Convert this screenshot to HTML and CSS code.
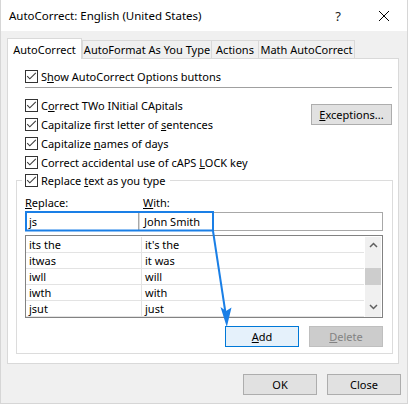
FILE: index.html
```html
<!DOCTYPE html>
<html>
<head>
<meta charset="utf-8">
<link rel="stylesheet" href="styles.css">
</head>
<body>
<div class="window">
  <div class="titlebar">
    <span class="title">AutoCorrect: English (United States)</span>
    <span class="capbtn help">?</span>
    <span class="capbtn close"><svg width="12" height="12" viewBox="0 0 12 12"><path d="M1 1L11 11M11 1L1 11" stroke="#000" stroke-width="1" fill="none"/></svg></span>
  </div>
  <div class="content">
    <div class="tabs">
      <div class="tab active t1">AutoCorrect</div>
      <div class="tab t2">AutoFormat As You Type</div>
      <div class="tab t3">Actions</div>
      <div class="tab t4">Math AutoCorrect</div>
    </div>
    <div class="panel">
      <div class="check"><span class="box"><svg width="11" height="11" viewBox="0 0 11 11"><polyline points="1.2,5.2 3.8,7.8 9.8,1.8" fill="none" stroke="#3a3a3a" stroke-width="1.1"/></svg></span><span>S<u>h</u>ow AutoCorrect Options buttons</span></div>
      <div class="sep"></div>
      <div class="opts">
        <div class="opts-list">
          <div class="check"><span class="box"><svg width="11" height="11" viewBox="0 0 11 11"><polyline points="1.2,5.2 3.8,7.8 9.8,1.8" fill="none" stroke="#3a3a3a" stroke-width="1.1"/></svg></span><span>C<u>o</u>rrect TWo INitial CApitals</span></div>
          <div class="check"><span class="box"><svg width="11" height="11" viewBox="0 0 11 11"><polyline points="1.2,5.2 3.8,7.8 9.8,1.8" fill="none" stroke="#3a3a3a" stroke-width="1.1"/></svg></span><span>Capitalize first letter of <u>s</u>entences</span></div>
          <div class="check"><span class="box"><svg width="11" height="11" viewBox="0 0 11 11"><polyline points="1.2,5.2 3.8,7.8 9.8,1.8" fill="none" stroke="#3a3a3a" stroke-width="1.1"/></svg></span><span>Capitalize <u>n</u>ames of days</span></div>
          <div class="check"><span class="box"><svg width="11" height="11" viewBox="0 0 11 11"><polyline points="1.2,5.2 3.8,7.8 9.8,1.8" fill="none" stroke="#3a3a3a" stroke-width="1.1"/></svg></span><span>Correct accidental use of cAPS <u>L</u>OCK key</span></div>
        </div>
        <button class="btn exceptions"><u>E</u>xceptions...</button>
      </div>
      <fieldset class="group">
        <legend class="legend"><div class="check"><span class="box"><svg width="11" height="11" viewBox="0 0 11 11"><polyline points="1.2,5.2 3.8,7.8 9.8,1.8" fill="none" stroke="#3a3a3a" stroke-width="1.1"/></svg></span><span>Replace <u>t</u>ext as you type</span></div></legend>
        <div class="labels"><span class="lab1"><u>R</u>eplace:</span><span><u>W</u>ith:</span></div>
        <div class="entry"><span class="c1">js</span><span class="c2">John Smith</span></div>
        <div class="list">
          <div class="rows">
            <div class="row"><span class="col1">its the</span><span class="col2">it's the</span></div>
            <div class="row"><span class="col1">itwas</span><span class="col2">it was</span></div>
            <div class="row"><span class="col1">iwll</span><span class="col2">will</span></div>
            <div class="row"><span class="col1">iwth</span><span class="col2">with</span></div>
            <div class="row"><span class="col1">jsut</span><span class="col2">just</span></div>
          </div>
          <div class="scrollbar">
            <span class="arrow"><svg width="9" height="6" viewBox="0 0 9 6"><polyline points="1,5 4.5,1.5 8,5" fill="none" stroke="#606060" stroke-width="1.5"/></svg></span>
            <span class="thumb"></span>
            <span class="arrow down"><svg width="9" height="6" viewBox="0 0 9 6"><polyline points="1,1 4.5,4.5 8,1" fill="none" stroke="#606060" stroke-width="1.5"/></svg></span>
          </div>
        </div>
        <div class="actions">
          <button class="btn add"><u>A</u>dd</button>
          <button class="btn disabled"><u>D</u>elete</button>
        </div>
      </fieldset>
    </div>
    <div class="footer">
      <button class="btn">OK</button>
      <button class="btn">Close</button>
    </div>
  </div>
  <svg class="overlay" width="408" height="404" viewBox="0 0 408 404">
    <rect x="25" y="212" width="187" height="18.5" fill="none" stroke="#1a7fe6" stroke-width="2"/>
    <line x1="212" y1="231" x2="224.5" y2="313" stroke="#1a7fe6" stroke-width="2"/>
    <polygon points="219.5,307 225,311 230.5,307.5 225.8,327" fill="#1a7fe6"/>
  </svg>
</div>
</body>
</html>
```
FILE: styles.css
```css
* { box-sizing: border-box; }
body {
  margin: 0;
  font-family: "Noto Sans", "Open Sans", sans-serif;
  font-size: 11px;
  color: #000;
}
u { text-decoration: underline; text-underline-offset: 1px; }
.window {
  position: relative;
  width: 408px;
  height: 404px;
  background: #f0f0f0;
  border: 1px solid #d6d6d6;
  border-top: none;
  overflow: hidden;
}
.titlebar {
  height: 31px;
  background: #fff;
  display: flex;
  align-items: center;
  padding-left: 8px;
}
.title { flex: 1; font-size: 11.5px; }
.capbtn {
  width: 46px;
  height: 31px;
  display: flex;
  align-items: center;
  justify-content: center;
  font-size: 13px;
  color: #222;
}
.close svg { display: block; }
.content { padding: 7px 8px 0 6px; }
.tabs {
  display: flex;
  align-items: flex-end;
  height: 21px;
  margin-bottom: -1px;
  position: relative;
  z-index: 1;
}
.tab {
  height: 18px;
  margin-bottom: 1px;
  border: 1px solid #d9d9d9;
  border-bottom: none;
  background: #f0f0f0;
  display: flex;
  align-items: center;
  justify-content: center;
  white-space: nowrap;
}
.tab.active { height: 21px; margin-bottom: 0; background: #fff; }
.t1 { width: 75px; }
.t2 { width: 130px; }
.t3 { width: 48px; margin-left: -1px; }
.t4 { width: 97px; margin-left: -1px; }
.panel {
  width: 392px;
  background: #fff;
  border: 1px solid #d9d9d9;
  padding: 8px 0 9px 17px;
}
.check {
  display: flex;
  align-items: center;
  height: 19px;
  gap: 3px;
  white-space: nowrap;
}
.box {
  width: 13px;
  height: 13px;
  border: 1px solid #333;
  background: #fff;
  flex: none;
  display: flex;
}
.box svg { display: block; }
.sep { height: 1px; background: #a0a0a0; margin: 1px 6px 0 0; }
.opts { display: flex; justify-content: space-between; margin-top: 8px; }
.btn {
  height: 21px;
  background: #e1e1e1;
  border: 1px solid #adadad;
  font: inherit;
  color: #000;
  padding: 0;
  width: 74px;
}
.exceptions { width: 81px; margin-top: 8px; margin-right: 6px; }
.group {
  margin: -1px 5px 0 -9px;
  padding: 0 9px 6px 8px;
  border: 1px solid #dcdcdc;
  min-width: 0;
}
.legend { margin-left: -3px; padding: 0 4px 0 3px; }
.labels { display: flex; height: 16px; margin: 4px 0 2px; align-items: center; }
.lab1 { width: 118px; }
.entry {
  display: flex;
  height: 19px;
  border: 1px solid #a8a8a8;
  background: #fff;
  line-height: 17px;
}
.c1 { width: 113px; border-right: 1px solid #a8a8a8; padding-left: 3px; }
.c2 { border-left: 1px solid #d8d8d8; padding-left: 4px; }
.list {
  display: flex;
  margin-top: 4px;
  height: 83px;
  border: 1px solid #828282;
  padding: 1px 1px 0 0;
  background: #fff;
}
.rows { flex: 1; }
.row {
  display: flex;
  height: 16px;
  border-bottom: 1px solid #e3e3e3;
  line-height: 15px;
}
.col1 { width: 116px; border-right: 1px solid #e3e3e3; padding-left: 3px; }
.col2 { padding-left: 3px; }
.scrollbar {
  width: 16px;
  margin-left: 1px;
  background: #f0f0f0;
  display: flex;
  flex-direction: column;
  align-items: center;
}
.arrow { height: 16px; display: flex; align-items: center; justify-content: center; }
.arrow svg { display: block; }
.thumb { width: 16px; height: 17px; background: #cdcdcd; margin-top: 15px; }
.arrow.down { margin-top: auto; margin-bottom: 2px; }
.actions { display: flex; justify-content: flex-end; gap: 10px; margin-top: 8px; }
.add { background: #e5f1fb; border-color: #0078d7; }
.disabled { background: #cccccc; border-color: #bfbfbf; color: #838383; }
.footer { display: flex; justify-content: flex-end; gap: 10px; margin: 10px -2px 0 0; }
.overlay { position: absolute; left: 0; top: 0; pointer-events: none; }
```
